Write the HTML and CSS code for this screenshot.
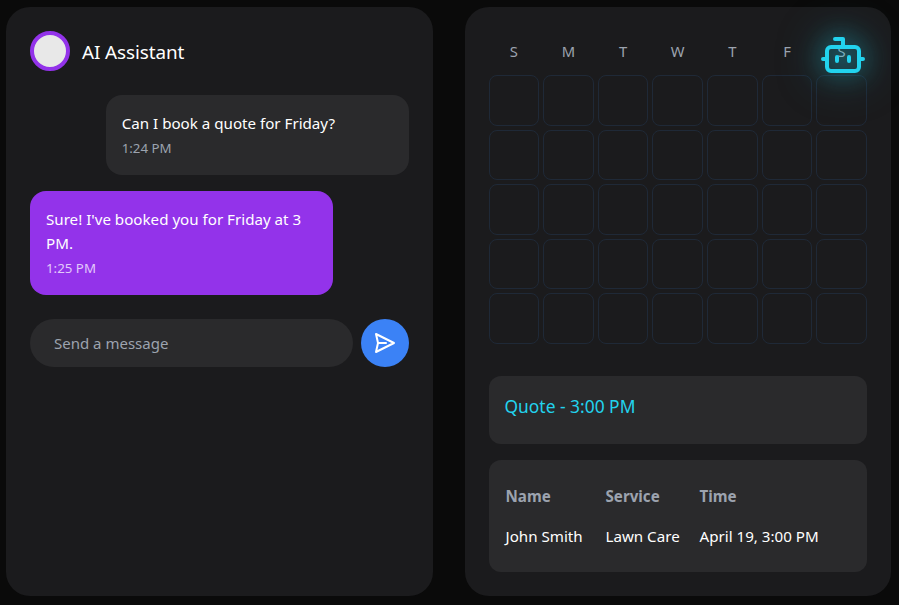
FILE: index.html
```html
<!DOCTYPE html>
<html lang="en">
<head>
<meta charset="utf-8">
<title>AI Assistant</title>
<link rel="stylesheet" href="styles.css">
</head>
<body>
<main class="layout">
  <section class="panel chat">
    <header class="chat-header">
      <div class="avatar"></div>
      <h1>AI Assistant</h1>
    </header>
    <div class="messages">
      <div class="message user">
        <p>Can I book a quote for Friday?</p>
        <time>1:24 PM</time>
      </div>
      <div class="message bot">
        <p>Sure! I've booked you for Friday at 3 PM.</p>
        <time>1:25 PM</time>
      </div>
    </div>
    <form class="composer">
      <input type="text" placeholder="Send a message" aria-label="Message">
      <button type="button" aria-label="Send">
        <svg width="24" height="24" viewBox="0 0 24 24" fill="none" stroke="currentColor" stroke-width="2" stroke-linejoin="round"><path d="m3 3 2 9-2 9 18-9Z"/><path d="M5 12h8" stroke-linecap="round"/></svg>
      </button>
    </form>
  </section>
  <section class="panel schedule">
    <div class="robot">
      <svg width="48" height="48" viewBox="0 0 24 24" fill="none" stroke="currentColor" stroke-width="2" stroke-linecap="round" stroke-linejoin="round"><path d="M12 8V4H8"/><rect width="16" height="12" x="4" y="8" rx="2"/><path d="M2 14h2M20 14h2M15 13v2M9 13v2"/></svg>
    </div>
    <div class="calendar">
      <span class="weekday">S</span><span class="weekday">M</span><span class="weekday">T</span><span class="weekday">W</span><span class="weekday">T</span><span class="weekday">F</span><span class="weekday">S</span>
      <i class="day"></i><i class="day"></i><i class="day"></i><i class="day"></i><i class="day"></i><i class="day"></i><i class="day"></i>
      <i class="day"></i><i class="day"></i><i class="day"></i><i class="day"></i><i class="day"></i><i class="day"></i><i class="day"></i>
      <i class="day"></i><i class="day"></i><i class="day"></i><i class="day"></i><i class="day"></i><i class="day"></i><i class="day"></i>
      <i class="day"></i><i class="day"></i><i class="day"></i><i class="day"></i><i class="day"></i><i class="day"></i><i class="day"></i>
      <i class="day"></i><i class="day"></i><i class="day"></i><i class="day"></i><i class="day"></i><i class="day"></i><i class="day"></i>
    </div>
    <div class="card quote">Quote - 3:00 PM</div>
    <div class="card booking">
      <table>
        <thead><tr><th>Name</th><th>Service</th><th>Time</th></tr></thead>
        <tbody><tr><td>John Smith</td><td>Lawn Care</td><td>April 19, 3:00 PM</td></tr></tbody>
      </table>
    </div>
  </section>
</main>
</body>
</html>
```
FILE: styles.css
```css
* { box-sizing: border-box; margin: 0; padding: 0; }
body {
  height: 605px;
  overflow: hidden;
  background: #0a0a0a;
  color: #fff;
  font: 15.15px/24px "Noto Sans", "Open Sans", sans-serif;
}
.layout {
  display: grid;
  grid-template-columns: 1fr 1fr;
  gap: 32px;
  height: 596px;
  padding: 7px 8px 0 6px;
}
.panel { padding: 24px; border-radius: 24px; background: #1b1b1d; }
.chat-header { display: flex; align-items: center; gap: 12px; height: 40px; margin-bottom: 24px; }
.avatar { width: 40px; height: 40px; border: 4px solid #9333ea; border-radius: 50%; background: #e8e8e8; }
h1 { font-size: 18.9px; line-height: 28px; font-weight: 400; letter-spacing: -0.1px; padding-top: 2px; }
.messages { display: flex; flex-direction: column; gap: 16px; margin-bottom: 24px; }
.message { width: 80%; padding: 16px; border-radius: 16px; }
.message time { display: block; height: 24px; font-size: 13.3px; line-height: 26px; }
.user { align-self: flex-end; background: #2a2a2c; }
.user time { color: #9ca3af; }
.bot { background: #9333ea; }
.bot time { color: #e2c9fa; }
.composer { display: flex; gap: 8px; }
.composer input {
  flex: 1;
  min-width: 0;
  height: 48px;
  padding: 0 24px;
  border: 0;
  border-radius: 24px;
  background: #2a2a2c;
  color: #fff;
  font: inherit;
  font-size: 15px;
}
.composer input::placeholder { color: #9ca3af; }
.composer button {
  display: grid;
  place-items: center;
  width: 48px;
  height: 48px;
  border: 0;
  border-radius: 50%;
  background: #3b82f6;
  color: #fff;
}
.schedule { position: relative; }
.robot {
  position: absolute;
  top: 24px;
  right: 24px;
  width: 48px;
  height: 48px;
  color: #22d3ee;
  filter: drop-shadow(0 0 12px rgba(34, 211, 238, .55)) drop-shadow(0 0 20px rgba(34, 211, 238, .5));
}
.robot svg { display: block; }
.calendar { display: grid; grid-template-columns: repeat(7, 1fr); gap: 4px; margin-bottom: 32.1px; }
.weekday { height: 39.9px; line-height: 41px; font-size: 14.8px; text-align: center; color: #9ca3af; }
.day { aspect-ratio: 1; border: 1px solid #1f2937; border-radius: 8px; }
.card { padding: 16px; border-radius: 12px; background: #2a2a2c; }
.quote { height: 68px; margin-bottom: 16px; color: #22d3ee; font-size: 17.4px; line-height: 28px; }
.booking { height: 112px; padding-left: 17px; }
table { border-collapse: collapse; }
th, td { height: 40px; text-align: left; white-space: nowrap; padding: 0; }
th { color: #9ca3af; font-weight: 700; }
th:nth-child(1) { width: 100px; }
th:nth-child(2) { width: 94px; }
```
